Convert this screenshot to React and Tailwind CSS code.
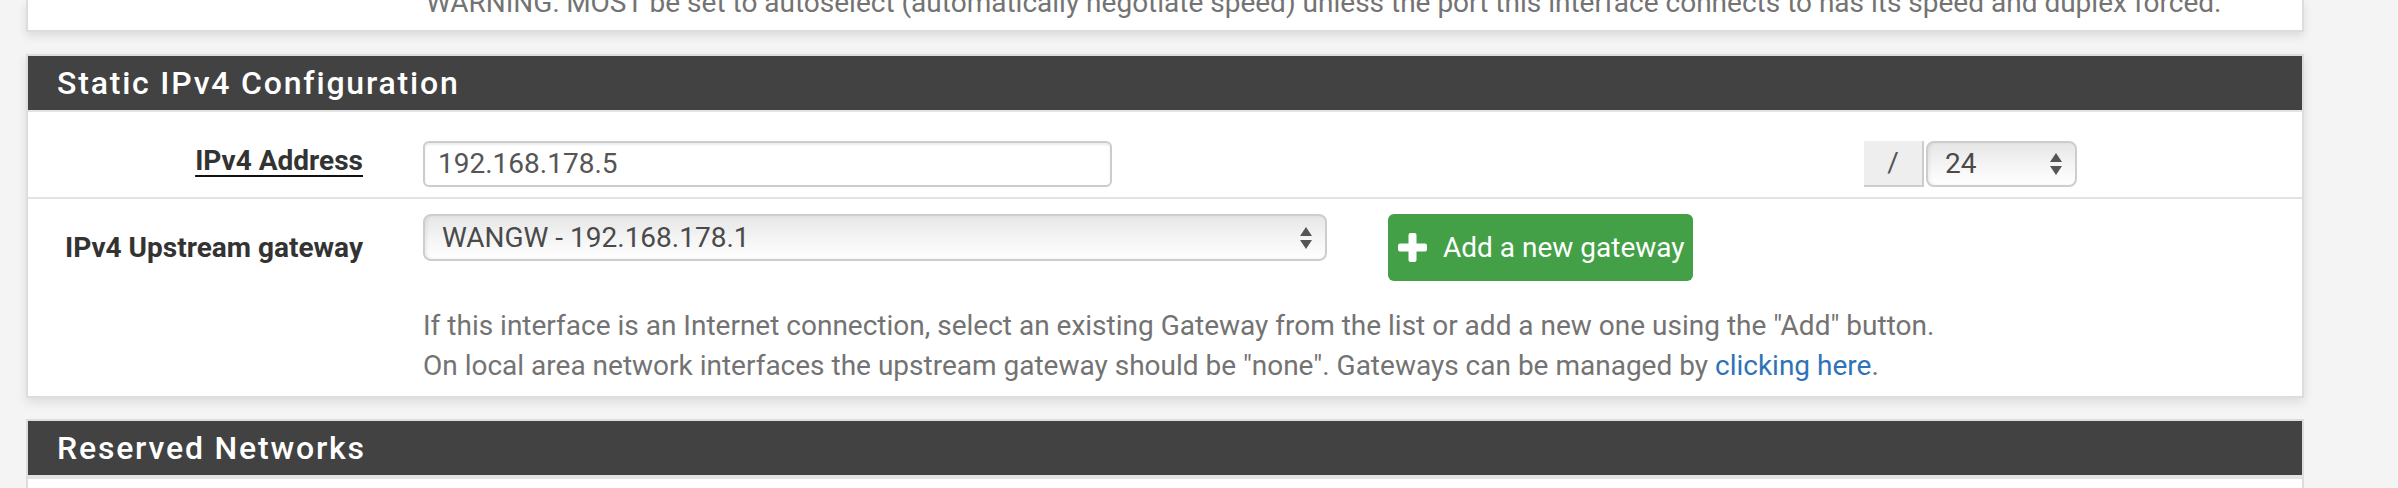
import React from 'react';

const Arrows = () => (
  <svg width="14" height="26" viewBox="0 0 14 26" className="shrink-0">
    <path d="M7 2 L13 11 L1 11 Z" fill="#555" />
    <path d="M7 24 L13 15 L1 15 Z" fill="#555" />
  </svg>
);

const PlusIcon = () => (
  <svg width="29" height="29" viewBox="0 0 29 29" className="shrink-0">
    <rect x="10.5" y="0" width="8" height="29" rx="2" fill="#fff" />
    <rect x="0" y="10.5" width="29" height="8" rx="2" fill="#fff" />
  </svg>
);

const FakeSelect = ({ value, className }) => (
  <div
    className={`flex items-center justify-between rounded-[8px] border-2 border-[#cdcdcd] bg-gradient-to-b from-[#e6e6e6] via-[#f4f4f4] to-white pl-[17px] pr-[12px] text-[28px] text-[#4a4a4a] shadow-[inset_2px_0_3px_rgba(0,0,0,0.06)] ${className}`}
  >
    <span>{value}</span>
    <Arrows />
  </div>
);

const PanelHeading = ({ title }) => (
  <div className="h-[54px] bg-[#424242] pl-[29px] text-[32px] font-medium leading-[54px] tracking-[1.8px] text-white">
    {title}
  </div>
);

export default function App() {
  return (
    <div className="h-[488px] overflow-hidden bg-[#f4f4f4] font-['Roboto',sans-serif]">
      <div className="ml-[26px] w-[2278px]">
        {/* previous panel, only its last line shows */}
        <div className="h-[32px] overflow-hidden border-x-2 border-b-2 border-[#dddddd] bg-white shadow-[0_4px_10px_rgba(0,0,0,0.10)]">
          <p className="mt-[-17px] whitespace-nowrap pl-[398px] text-[28px] leading-[40px] text-[#737373]">
            WARNING: MOST be set to autoselect (automatically negotiate speed) unless the port this interface connects to has its speed and duplex forced.
          </p>
        </div>

        {/* Static IPv4 Configuration */}
        <div className="mt-[22px] border-2 border-[#dddddd] bg-white shadow-[0_4px_10px_rgba(0,0,0,0.10)]">
          <PanelHeading title="Static IPv4 Configuration" />

          <div className="flex border-y-2 border-[#e3e3e3] pt-[29px] pb-[10px]">
            <div className="w-[365px] shrink-0 pr-[30px] text-right">
              <span className="text-[28px] font-bold leading-[40px] text-[#333333] underline decoration-[#111111] decoration-2 underline-offset-[5px]">
                IPv4 Address
              </span>
            </div>
            <div className="flex flex-1 pl-[30px]">
              <div className="flex h-[46px] w-[689px] items-center rounded-[6px] border-2 border-[#cccccc] pl-[13px] text-[28px] text-[#555555] shadow-[inset_0_2px_2px_rgba(0,0,0,0.08)]">
                192.168.178.5
              </div>
              <div className="ml-[752px] flex h-[46px] w-[60px] items-center justify-center border-r-2 border-b-2 border-[#cccccc] bg-[#eeeeee] text-[28px] text-[#555555]">
                /
              </div>
              <FakeSelect value="24" className="ml-[2px] h-[46px] w-[151px]" />
            </div>
          </div>

          <div className="flex pt-[15px] pb-[10px]">
            <div className="w-[365px] shrink-0 pt-[14px] pr-[30px] text-right text-[28px] font-bold leading-[40px] text-[#333333]">
              IPv4 Upstream gateway
            </div>
            <div className="flex-1 pl-[30px]">
              <div className="flex items-start gap-[61px]">
                <FakeSelect value="WANGW - 192.168.178.1" className="h-[47px] w-[904px]" />
                <button className="flex h-[67px] w-[305px] items-center gap-[16px] rounded-[6px] bg-[#43a047] pl-[10px] text-[28px] text-white">
                  <PlusIcon />
                  <span>Add a new gateway</span>
                </button>
              </div>
              <div className="mt-[25px] text-[28px] leading-[40px] text-[#737373]">
                <p>If this interface is an Internet connection, select an existing Gateway from the list or add a new one using the "Add" button.</p>
                <p>
                  On local area network interfaces the upstream gateway should be "none". Gateways can be managed by{' '}
                  <a href="#" className="text-[#2f73b7]">clicking here</a>.
                </p>
              </div>
            </div>
          </div>
        </div>

        {/* Reserved Networks */}
        <div className="mt-[21px] border-2 border-[#dddddd] bg-white">
          <PanelHeading title="Reserved Networks" />
          <div className="h-[40px] border-t-4 border-[#e3e3e3]" />
        </div>
      </div>
    </div>
  );
}
